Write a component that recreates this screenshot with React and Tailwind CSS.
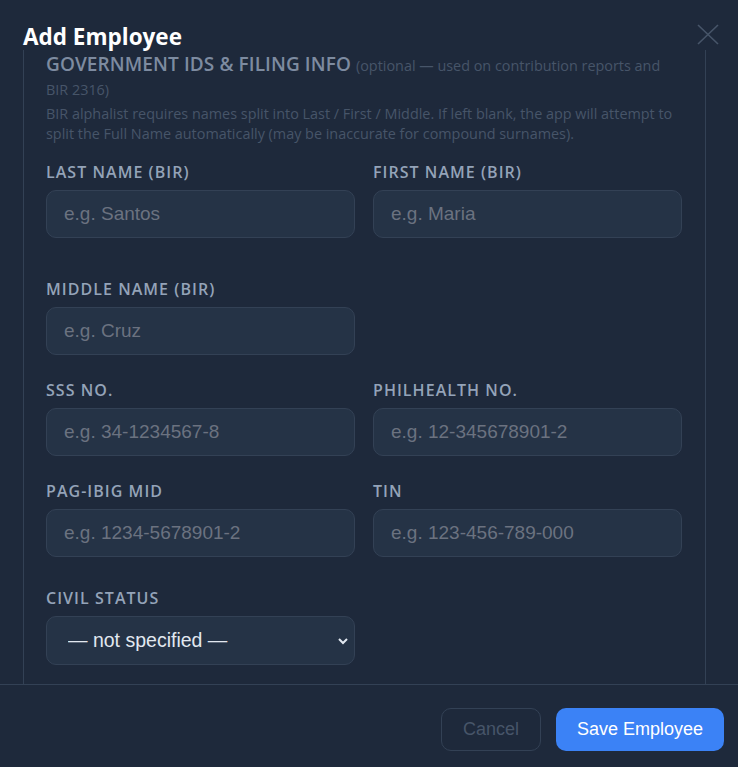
import React from 'react';

const labelFont = { fontFamily: '"Open Sans", "Noto Sans", sans-serif' };
const inputFont = { fontFamily: '"Liberation Sans", Arial, sans-serif' };

const Field = ({ label, placeholder }) => (
    <div className="flex flex-col">
        <label className="text-[16px] font-semibold tracking-[0.065em] uppercase text-[#94a3b8] leading-5 mb-2" style={labelFont}>
            {label}
        </label>
        <input
            placeholder={placeholder}
            className="h-[48px] w-full rounded-[10px] border border-[#334155] bg-[#253346] px-[17px] text-[19px] text-[#e2e8f0] placeholder:text-[#6b7280] outline-none"
            style={inputFont}
        />
    </div>
);

const App = () => {
    return (
        <div className="w-[738px] h-[767px] bg-[#1e293b] flex flex-col overflow-hidden">
            <div className="relative px-[23px] pt-[23px] h-[50px]">
                <h1 className="text-[22.5px] font-bold text-white leading-[27px]" style={labelFont}>Add Employee</h1>
                <button className="absolute right-[18px] top-[23px] text-[#475569]">
                    <svg width="24" height="24" viewBox="0 0 24 24" fill="none" stroke="currentColor" strokeWidth="1.6">
                        <path d="M2 2 L22 21" />
                        <path d="M22 2 L2 21" />
                    </svg>
                </button>
            </div>

            <div className="ml-[23px] mr-[32px] h-[634px] border-x border-[#334155] overflow-hidden pl-[22px] pr-[23px] pt-[2px]">
                <div className="text-[19px] leading-[24px]" style={labelFont}>
                    <span className="font-semibold uppercase text-[#7d8ba0] tracking-[0.005em]">Government IDs &amp; Filing Info</span>{' '}
                    <span className="text-[14.4px] leading-none text-[#475569]">(optional — used on contribution reports and BIR 2316)</span>
                </div>
                <p className="mt-[4px] text-[14.4px] leading-[19.5px] text-[#475569]" style={labelFont}>
                    BIR alphalist requires names split into Last / First / Middle. If left blank, the app will attempt to split the Full Name automatically (may be inaccurate for compound surnames).
                </p>

                <div className="grid grid-cols-2 gap-x-[18px] mt-[19px]">
                    <Field label="Last Name (BIR)" placeholder="e.g. Santos" />
                    <Field label="First Name (BIR)" placeholder="e.g. Maria" />
                </div>
                <div className="grid grid-cols-2 gap-x-[18px] mt-[41px]">
                    <Field label="Middle Name (BIR)" placeholder="e.g. Cruz" />
                </div>
                <div className="grid grid-cols-2 gap-x-[18px] mt-[25px]">
                    <Field label="SSS No." placeholder="e.g. 34-1234567-8" />
                    <Field label="PhilHealth No." placeholder="e.g. 12-345678901-2" />
                </div>
                <div className="grid grid-cols-2 gap-x-[18px] mt-[25px]">
                    <Field label="Pag-IBIG MID" placeholder="e.g. 1234-5678901-2" />
                    <Field label="TIN" placeholder="e.g. 123-456-789-000" />
                </div>
                <div className="grid grid-cols-2 gap-x-[18px] mt-[31px]">
                    <div className="flex flex-col">
                        <label className="text-[16px] font-semibold tracking-[0.065em] uppercase text-[#94a3b8] leading-5 mb-2" style={labelFont}>
                            Civil Status
                        </label>
                        <div className="relative">
                            <select
                                className="appearance-none h-[49px] w-full rounded-[10px] border border-[#334155] bg-[#253346] pl-[21px] pr-10 text-[19.5px] text-[#e2e8f0] outline-none"
                                style={inputFont}
                                defaultValue=""
                            >
                                <option value="">— not specified —</option>
                                <option value="single">Single</option>
                                <option value="married">Married</option>
                            </select>
                            <svg className="absolute right-[6px] top-[20px] pointer-events-none" width="12" height="10" viewBox="0 0 12 10" fill="none" stroke="#e2e8f0" strokeWidth="2">
                                <path d="M2 3 L6 7 L10 3" />
                            </svg>
                        </div>
                    </div>
                </div>
            </div>

            <div className="border-t border-[#334155] flex justify-end gap-[15px] px-[14px] pt-[23px]">
                <button className="h-[43px] px-[21px] rounded-[10px] border border-[#334155] text-[18px] text-[#475569]" style={inputFont}>
                    Cancel
                </button>
                <button className="h-[43px] px-[21px] rounded-[10px] bg-[#3b82f6] text-[18px] text-white" style={inputFont}>
                    Save Employee
                </button>
            </div>
        </div>
    );
};

export default App;
